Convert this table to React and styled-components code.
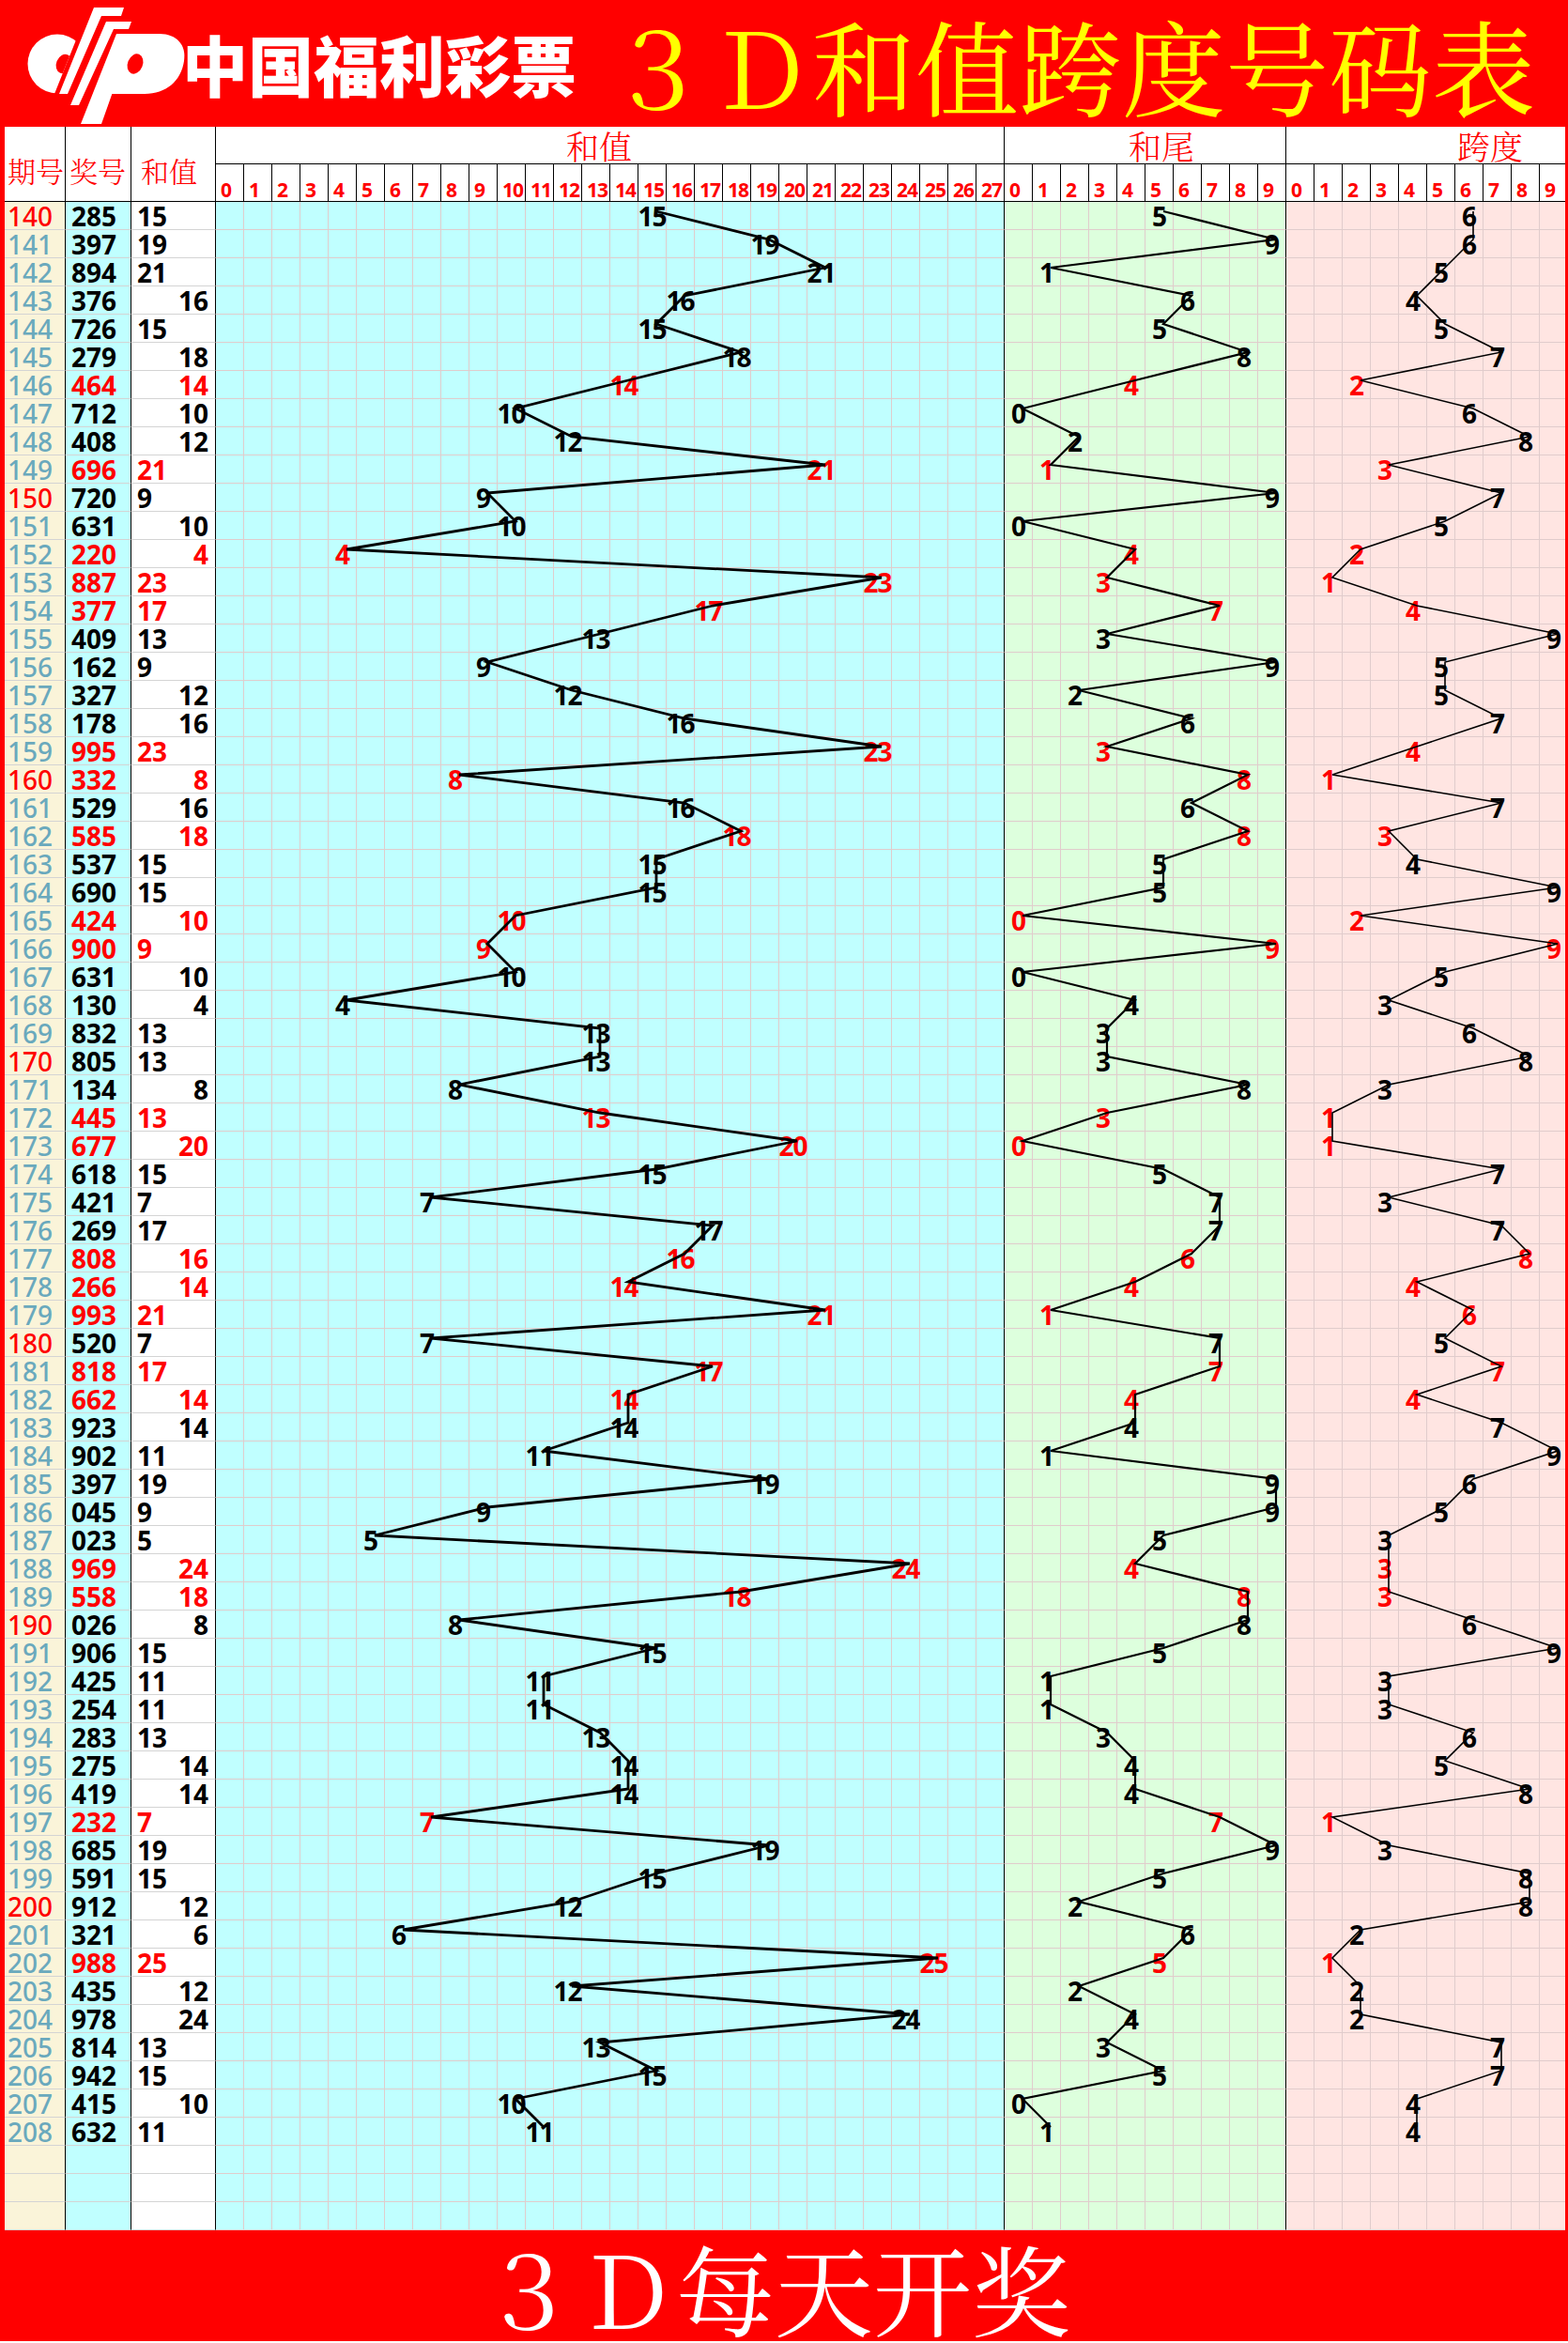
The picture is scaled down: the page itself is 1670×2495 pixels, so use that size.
import React from 'react';
import styled, { createGlobalStyle } from 'styled-components';

const RED = '#ff0000';
const GRID = '#e0cccc';
const RULE = '#d4d4d4';
const KAI = '"AR PL UKai CN", "KaiTi", "Noto Serif CJK SC", "Noto Sans CJK SC", serif';
const NUM = '"Noto Sans", "Open Sans", sans-serif';

const DRAWS = [
    [140, '285'], [141, '397'], [142, '894'], [143, '376'], [144, '726'], [145, '279'],
    [146, '464'], [147, '712'], [148, '408'], [149, '696'], [150, '720'], [151, '631'],
    [152, '220'], [153, '887'], [154, '377'], [155, '409'], [156, '162'], [157, '327'],
    [158, '178'], [159, '995'], [160, '332'], [161, '529'], [162, '585'], [163, '537'],
    [164, '690'], [165, '424'], [166, '900'], [167, '631'], [168, '130'], [169, '832'],
    [170, '805'], [171, '134'], [172, '445'], [173, '677'], [174, '618'], [175, '421'],
    [176, '269'], [177, '808'], [178, '266'], [179, '993'], [180, '520'], [181, '818'],
    [182, '662'], [183, '923'], [184, '902'], [185, '397'], [186, '045'], [187, '023'],
    [188, '969'], [189, '558'], [190, '026'], [191, '906'], [192, '425'], [193, '254'],
    [194, '283'], [195, '275'], [196, '419'], [197, '232'], [198, '685'], [199, '591'],
    [200, '912'], [201, '321'], [202, '988'], [203, '435'], [204, '978'], [205, '814'],
    [206, '942'], [207, '415'], [208, '632'],
];

const ROWS = DRAWS.map(([period, code]) => {
    const d = code.split('').map(Number);
    const sum = d[0] + d[1] + d[2];
    return {
        period,
        code,
        sum,
        tail: sum % 10,
        span: Math.max(...d) - Math.min(...d),
        pair: new Set(d).size < 3,
    };
});

const EMPTY_ROWS = 3;
const CELL = 30;

const SECTIONS = [
    { key: 'sum', cols: 28, bg: '#c0ffff', label: '和值', pad: 373, stroke: 2.8 },
    { key: 'tail', cols: 10, bg: '#ddffdd', label: '和尾', pad: 132, stroke: 2.2 },
    { key: 'span', cols: 10, bg: '#ffe5e2', label: '跨度', pad: 182, stroke: 1.6 },
];

const GlobalStyle = createGlobalStyle`
    html, body {
        margin: 0;
        padding: 0;
        background: #fff;
    }
`;

const Page = styled.div`
    width: 1670px;
`;

const TitleBar = styled.header`
    height: 135px;
    background: ${RED};
    display: flex;
    align-items: center;
`;

const LogoSvg = styled.svg`
    width: 180px;
    height: 135px;
    margin-left: 20px;
    flex-shrink: 0;
`;

const Brand = styled.div`
    margin-left: -6px;
    color: #fff;
    font-family: "Noto Sans CJK SC", sans-serif;
    font-weight: 900;
    font-size: 70px;
    line-height: 1;
    white-space: nowrap;
`;

const Title = styled.h1`
    margin: 0 0 0 31px;
    color: #ffff00;
    font-family: ${KAI};
    font-weight: 400;
    font-size: 110px;
    line-height: 1;
    white-space: nowrap;
`;

const Sheet = styled.section`
    width: 1670px;
    box-sizing: border-box;
    border-left: 5px solid ${RED};
    border-right: 3px solid ${RED};
    overflow: hidden;
`;

const HeadGrid = styled.div`
    display: grid;
    grid-template-columns: 65px 70px 90px 840px 300px 300px;
    grid-template-rows: 40px 40px;
    background: #fff;
`;

const ColLabel = styled.div`
    grid-row: span 2;
    box-sizing: border-box;
    border-right: 1px solid #000;
    border-bottom: 1px solid #000;
    display: flex;
    align-items: center;
    padding: 12px 0 0 ${({ $pad }) => $pad}px;
    color: ${RED};
    font-family: ${KAI};
    font-size: 30px;
    font-weight: 300;
    white-space: nowrap;
`;

const SectionLabel = styled.div`
    box-sizing: border-box;
    border-right: 1px solid #000;
    border-bottom: 1px solid #000;
    display: flex;
    align-items: center;
    padding-left: ${({ $pad }) => $pad}px;
    color: ${RED};
    font-family: ${KAI};
    font-size: 35px;
    font-weight: 300;
    white-space: nowrap;
`;

const Scale = styled.div`
    display: grid;
    grid-template-columns: repeat(${({ $cols }) => $cols}, ${CELL}px);
    box-sizing: border-box;
    border-bottom: 1px solid #000;
`;

const ScaleCell = styled.div`
    box-sizing: border-box;
    border-right: 1px solid #000;
    display: flex;
    align-items: flex-end;
    padding: 0 0 1px 5px;
    color: ${RED};
    font-family: ${NUM};
    font-weight: 700;
    font-size: 21px;
    line-height: 1;
    letter-spacing: -1px;
    white-space: nowrap;
`;

const Body = styled.div`
    position: relative;
`;

const Row = styled.div`
    display: grid;
    grid-template-columns: 65px 70px 90px repeat(48, ${CELL}px);
    grid-template-rows: ${CELL}px;
    height: ${CELL}px;
`;

const Lead = styled.div`
    box-sizing: border-box;
    background: ${({ $bg }) => $bg};
    border-right: 1px solid #000;
    border-bottom: 1px solid ${RULE};
    display: flex;
    align-items: center;
    justify-content: ${({ $right }) => ($right ? 'flex-end' : 'flex-start')};
    padding: ${({ $right, $pad }) => ($right ? '0 7px 0 0' : `0 0 0 ${$pad}px`)};
    color: ${({ $color }) => $color};
    font-family: ${NUM};
    font-weight: ${({ $weight }) => $weight};
    font-size: 28px;
    line-height: 1;
`;

const Cell = styled.div`
    box-sizing: border-box;
    background: ${({ $bg }) => $bg};
    border-right: 1px solid ${({ $end }) => ($end ? '#000' : GRID)};
    border-bottom: 1px solid ${GRID};
    display: flex;
    align-items: center;
    justify-content: center;
    overflow: visible;
`;

const Mark = styled.span`
    color: ${({ $red }) => ($red ? RED : '#000')};
    font-family: ${NUM};
    font-weight: 700;
    font-size: 28px;
    line-height: ${CELL}px;
    white-space: nowrap;
    letter-spacing: -1px;
`;

const Trend = styled.svg`
    position: absolute;
    top: 0;
    left: 225px;
    pointer-events: none;
    overflow: visible;
`;

const FootBar = styled.footer`
    height: 118px;
    background: ${RED};
    display: flex;
    align-items: center;
    justify-content: center;
    padding-right: 20px;
    box-sizing: border-box;
`;

const Slogan = styled.div`
    color: #fff;
    font-family: ${KAI};
    font-size: 105px;
    line-height: 1;
    white-space: nowrap;
`;

const Logo = () => (
    <LogoSvg viewBox='0 0 180 135'>
        <defs>
            <clipPath id='c-cut'>
                <polygon points='0,0 78,0 24,135 0,135' />
            </clipPath>
        </defs>
        <g clipPath='url(#c-cut)'>
            <circle cx='41' cy='68' r='31.5' fill='#fff' />
            <ellipse cx='48' cy='68' rx='8' ry='10.5' fill={RED} transform='rotate(22 48 68)' />
        </g>
        <polygon points='80,8 112,8 109,17 88,17 52,100 43,100' fill='#fff' />
        <polygon points='93,23 120,23 117,31 101,31 64,112 55,112' fill='#fff' />
        <polygon points='104,36 122,36 88,132 66,132' fill='#fff' />
        <path d='M108 36 L150 36 C168 36 179 48 176 65 C173 86 157 100 134 100 L92 100 Z' fill='#fff' />
        <ellipse cx='124' cy='68' rx='8' ry='11' fill={RED} transform='rotate(22 124 68)' />
    </LogoSvg>
);

const sectionOffset = (index) =>
    SECTIONS.slice(0, index).reduce((acc, s) => acc + s.cols * CELL, 0);

const TrendLines = () => {
    const width = SECTIONS.reduce((acc, s) => acc + s.cols * CELL, 0);
    const height = (ROWS.length + EMPTY_ROWS) * CELL;

    return (
        <Trend width={width} height={height} viewBox={`0 0 ${width} ${height}`}>
            {SECTIONS.map((s, si) => {
                const base = sectionOffset(si);
                const points = ROWS.map((r, i) =>
                    `${base + r[s.key] * CELL + CELL / 2 + 4},${i * CELL + CELL / 2 - 5}`
                ).join(' ');

                return (
                    <polyline
                        key={s.key}
                        points={points}
                        fill='none'
                        stroke='#000'
                        strokeWidth={s.stroke}
                        strokeLinejoin='miter'
                    />
                );
            })}
        </Trend>
    );
};

const ChartCells = ({ row }) =>
    SECTIONS.map((s) =>
        Array.from({ length: s.cols }, (_, c) => (
            <Cell key={`${s.key}-${c}`} $bg={s.bg} $end={c === s.cols - 1}>
                {row && row[s.key] === c && <Mark $red={row.pair}>{c}</Mark>}
            </Cell>
        ))
    );

const DataRow = ({ row }) => {
    const periodColor = row.period % 10 === 0 ? RED : '#6aa9bd';
    const valueColor = row.pair ? RED : '#000';

    return (
        <Row>
            <Lead $bg='#faf4d9' $pad={3} $color={periodColor} $weight={500}>{row.period}</Lead>
            <Lead $bg='#c0ffff' $pad={6} $color={valueColor} $weight={700}>{row.code}</Lead>
            <Lead $bg='#fff' $pad={6} $color={valueColor} $weight={700} $right={row.sum % 2 === 0}>
                {row.sum}
            </Lead>
            <ChartCells row={row} />
        </Row>
    );
};

const BlankRow = () => (
    <Row>
        <Lead $bg='#faf4d9' />
        <Lead $bg='#c0ffff' />
        <Lead $bg='#fff' />
        <ChartCells row={null} />
    </Row>
);

const App = () => (
    <Page>
        <GlobalStyle />

        <TitleBar>
            <Logo />
            <Brand>中国福利彩票</Brand>
            <Title>３Ｄ和值跨度号码表</Title>
        </TitleBar>

        <Sheet>
            <HeadGrid>
                <ColLabel $pad={3}>期号</ColLabel>
                <ColLabel $pad={4}>奖号</ColLabel>
                <ColLabel $pad={10}>和值</ColLabel>

                {SECTIONS.map((s) => (
                    <SectionLabel key={s.key} $pad={s.pad}>{s.label}</SectionLabel>
                ))}

                {SECTIONS.map((s) => (
                    <Scale key={s.key} $cols={s.cols}>
                        {Array.from({ length: s.cols }, (_, c) => (
                            <ScaleCell key={c}>{c}</ScaleCell>
                        ))}
                    </Scale>
                ))}
            </HeadGrid>

            <Body>
                {ROWS.map((row) => (
                    <DataRow key={row.period} row={row} />
                ))}
                {Array.from({ length: EMPTY_ROWS }, (_, i) => (
                    <BlankRow key={`blank-${i}`} />
                ))}
                <TrendLines />
            </Body>
        </Sheet>

        <FootBar>
            <Slogan>３Ｄ每天开奖</Slogan>
        </FootBar>
    </Page>
);

export default App;
